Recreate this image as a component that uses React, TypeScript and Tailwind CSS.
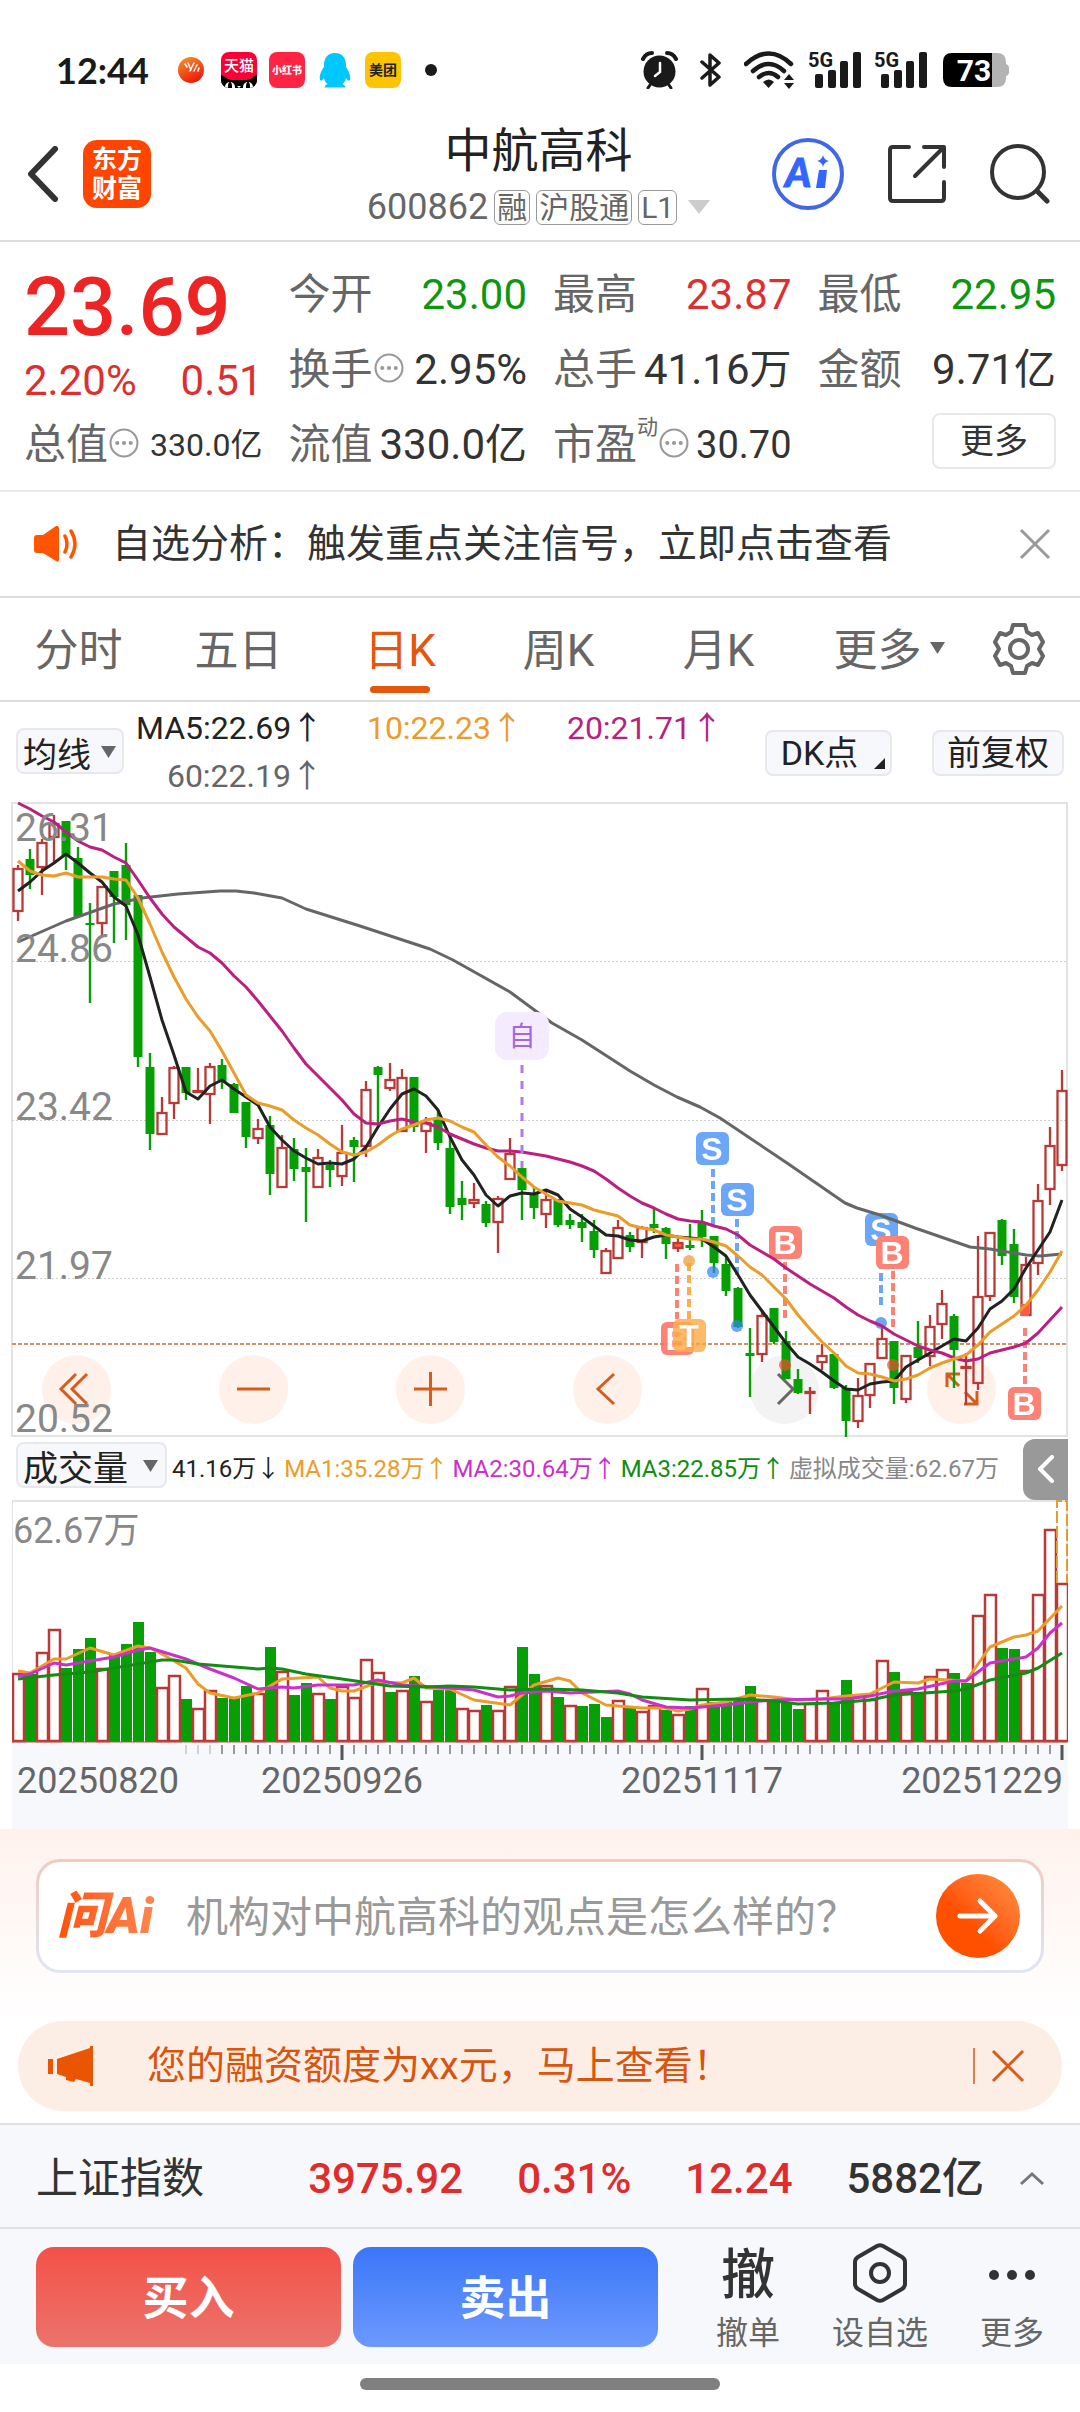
import React from 'react';

type Candle = [string, number, number, number, number];

const STEP = 12;
const RED = '#b83a36';
const GREEN = '#06a006';
const cx = (i: number) => 6 + i * STEP;

/* kind, high, body top, body bottom, low */
const candles: Candle[] = [
  ['r', 65, 68, 112, 121], ['g', 49, 59, 75, 89], ['r', 39, 42, 68, 95], ['r', 15, 23, 38, 62],
  ['g', 21, 21, 56, 70], ['g', 47, 58, 117, 117], ['g', 103, 123, 125, 203], ['r', 86, 86, 124, 136],
  ['g', 71, 71, 97, 143], ['g', 43, 65, 105, 140], ['g', 95, 95, 257, 267], ['g', 253, 267, 334, 350],
  ['r', 297, 312, 335, 335], ['r', 266, 267, 304, 319], ['g', 267, 267, 293, 300], ['r', 268, 290, 292, 293],
  ['r', 263, 266, 295, 324], ['g', 259, 265, 281, 289], ['g', 283, 284, 313, 313], ['g', 302, 302, 337, 348],
  ['r', 319, 328, 339, 344], ['g', 316, 325, 374, 395], ['r', 335, 347, 388, 388], ['g', 338, 349, 369, 381],
  ['g', 348, 367, 372, 422], ['r', 349, 357, 388, 388], ['g', 360, 365, 370, 387], ['r', 325, 352, 377, 386],
  ['g', 337, 340, 347, 382], ['r', 281, 289, 347, 357], ['g', 266, 267, 275, 327], ['r', 263, 279, 289, 291],
  ['r', 269, 277, 332, 332], ['g', 277, 277, 327, 332], ['r', 317, 322, 332, 353], ['g', 310, 319, 343, 350],
  ['g', 333, 348, 407, 414], ['g', 381, 398, 405, 420], ['r', 383, 399, 404, 408], ['g', 401, 404, 423, 427],
  ['r', 396, 398, 423, 453], ['r', 338, 353, 380, 380], ['g', 368, 368, 390, 420], ['g', 387, 393, 408, 419],
  ['r', 390, 399, 415, 428], ['g', 399, 399, 425, 427], ['g', 414, 420, 425, 429], ['g', 414, 422, 428, 442],
  ['g', 420, 431, 450, 458], ['r', 448, 450, 474, 474], ['r', 420, 427, 459, 459], ['g', 432, 435, 447, 452],
  ['r', 426, 427, 443, 458], ['g', 409, 424, 428, 433], ['g', 427, 428, 444, 459], ['r', 439, 442, 449, 452],
  ['g', 424, 445, 448, 450], ['g', 410, 422, 437, 447], ['g', 436, 436, 463, 473], ['g', 457, 464, 491, 496],
  ['g', 487, 488, 527, 528], ['g', 528, 553, 556, 597], ['r', 510, 515, 555, 562], ['g', 508, 508, 542, 544],
  ['g', 531, 541, 579, 579], ['g', 569, 579, 593, 594], ['r', 587, 591, 592, 614], ['r', 544, 555, 563, 570],
  ['g', 554, 554, 588, 589], ['g', 585, 588, 621, 637], ['r', 578, 595, 622, 628], ['r', 563, 563, 596, 608],
  ['r', 527, 538, 559, 559], ['g', 541, 541, 588, 604], ['r', 555, 555, 600, 603], ['g', 521, 547, 558, 563],
  ['r', 515, 526, 557, 566], ['r', 490, 503, 525, 539], ['g', 514, 516, 550, 588], ['r', 553, 566, 568, 605],
  ['r', 436, 496, 584, 590], ['r', 432, 432, 497, 501], ['g', 419, 420, 456, 465], ['g', 429, 444, 497, 503],
  ['r', 457, 464, 516, 516], ['r', 384, 400, 464, 475], ['r', 327, 345, 390, 405], ['r', 270, 290, 366, 371],
];

const ma5 = [
  91, 82, 71, 63, 54, 63, 73, 82, 97, 106, 135, 177, 220, 255, 292, 299, 286, 280, 289, 297, 305, 327, 340, 351, 358, 364,
  363, 364, 359, 347, 327, 309, 294, 289, 296, 310, 337, 360, 375, 395, 406, 396, 393, 394, 390, 395, 409, 417, 426, 435,
  436, 440, 441, 437, 435, 437, 438, 439, 447, 456, 475, 495, 511, 527, 543, 557, 564, 572, 581, 589, 590, 584, 582, 581,
  567, 560, 553, 546, 539, 541, 528, 509, 501, 489, 468, 450, 432, 400,
];
const ma10 = [
  61, 71, 75, 76, 73, 77, 77, 77, 79, 80, 98, 124, 152, 177, 199, 217, 231, 251, 273, 295, 303, 306, 310, 320, 328, 335,
  344, 352, 355, 352, 345, 336, 329, 325, 320, 318, 321, 327, 332, 345, 357, 366, 377, 387, 394, 401, 403, 405, 410, 413,
  416, 425, 428, 430, 435, 437, 439, 439, 442, 446, 456, 467, 475, 487, 499, 515, 529, 542, 553, 566, 573, 574, 577, 581,
  579, 575, 568, 563, 559, 555, 545, 532, 524, 516, 505, 490, 472, 451,
];
const ma20 = [
  3, 9, 16, 22, 32, 41, 47, 50, 57, 63, 80, 98, 114, 127, 137, 147, 153, 163, 176, 187, 201, 216, 231, 248, 264, 276, 288,
  300, 314, 323, 324, 321, 319, 322, 323, 327, 334, 339, 344, 348, 351, 351, 352, 354, 356, 359, 362, 366, 371, 379, 388,
  396, 403, 408, 414, 419, 421, 422, 426, 429, 435, 445, 452, 459, 468, 476, 484, 491, 498, 507, 515, 521, 526, 534, 540,
  546, 550, 553, 558, 561, 559, 553, 550, 547, 543, 533, 520, 507,
];
const ma60 =
  '6,142 54,121 102,104 130,98 166,94 208,91 224,91 242,93 270,98 294,109 348,126 418,149 441,160 498,192 540,223 570,240 618,271 642,285 665,297 688,307 708,318 775,363 833,403 845,408 868,415 903,428 958,447 978,449 1014,455 1028,456 1050,454';

const volumes = [
  69, 68, 90, 113, 74, 93, 104, 74, 87, 98, 120, 90, 55, 67, 43, 34, 52, 44, 44, 56, 49, 95, 71, 47, 59, 49, 43, 56, 45, 83,
  70, 50, 52, 66, 41, 52, 52, 34, 32, 37, 32, 56, 95, 68, 57, 45, 37, 36, 38, 25, 42, 34, 31, 37, 32, 28, 36, 54, 40, 41,
  42, 56, 43, 41, 39, 33, 39, 52, 38, 62, 47, 43, 82, 70, 51, 50, 66, 73, 69, 59, 127, 148, 94, 93, 72, 148, 213, 159,
];
const volumeKinds =
  'rgrrgggrggggrrgrrgggrgrggrgrrrrgrgrggrrgrrggrgrgggrgrrgrgrggggrgggrrggrrrgrgrrggrrggrrrr';

const volMa1 = [
  [0, 71], [1, 69], [3, 83], [4, 83], [6, 94], [8, 87], [10, 96], [11, 94], [12, 88], [14, 74], [15, 58], [16, 49], [18, 44],
  [20, 49], [22, 63], [25, 65], [26, 54], [27, 51], [28, 51], [30, 60], [32, 59], [33, 64], [34, 54], [36, 53], [38, 42],
  [41, 37], [43, 57], [45, 64], [46, 61], [47, 49], [49, 37], [52, 34], [54, 34], [55, 31], [56, 33], [57, 37], [59, 40],
  [61, 47], [63, 45], [65, 42], [67, 43], [69, 46], [71, 48], [73, 60], [75, 59], [76, 63], [79, 61], [81, 95], [83, 105],
  [84, 107], [85, 111], [87, 136],
];
const volMa2 = [
  [0, 66], [1, 68], [3, 79], [4, 77], [8, 85], [10, 92], [11, 94], [14, 83], [15, 78], [16, 73], [18, 64], [20, 53], [22, 55],
  [23, 54], [25, 57], [28, 57], [30, 62], [32, 57], [36, 54], [38, 52], [40, 45], [41, 46], [42, 49], [44, 51], [46, 49],
  [48, 50], [50, 51], [51, 48], [52, 42], [54, 35], [56, 34], [59, 37], [61, 40], [63, 42], [67, 43], [69, 43], [71, 46],
  [73, 51], [75, 53], [78, 61], [79, 61], [81, 79], [84, 85], [85, 94], [86, 109], [87, 119],
];
const volMa3 = [
  [0, 63], [3, 67], [6, 70], [10, 78], [12, 82], [13, 82], [15, 78], [20, 73], [21, 74], [22, 73], [24, 68], [27, 63],
  [31, 56], [34, 55], [36, 56], [38, 55], [41, 52], [44, 53], [47, 52], [50, 49], [52, 45], [56, 42], [60, 43], [63, 41],
  [65, 38], [68, 39], [71, 42], [73, 47], [78, 51], [79, 53], [81, 62], [84, 69], [85, 74], [87, 89],
];

const perBar = (ys: number[]) => ys.map((y, i) => `${cx(i)},${y}`).join(' ');
const fromBase = (pts: number[][]) => pts.map(([i, h]) => `${cx(i)},${242 - h}`).join(' ');

/* letter, left, top, line x, line start, line end, dot y */
const markers: [string, number, number, number, number, number, number][] = [
  ['B', 649, 522, 665, 464, 519, 0],
  ['T', 661, 519, 677, 463, 519, 461],
  ['S', 684, 332, 701, 369, 426, 472],
  ['S', 709, 383, 725, 419, 475, 526],
  ['B', 757, 426, 773, 462, 518, 565],
  ['S', 853, 413, 869, 449, 505, 523],
  ['B', 864, 436, 881, 471, 528, 565],
  ['B', 996, 587, 1013, 528, 584, 0],
];
const markerColor: Record<string, string> = { S: '#5b9df9', B: '#fb7565', T: '#fda43c' };
const dotColor: Record<string, string> = { S: '#2f86ee', B: '#e8502f', T: '#f09a35' };

function Candles() {
  return (
    <g>
      {candles.map(([k, hi, top, bot, lo], i) => {
        const x = cx(i);
        if (k === 'g') {
          return (
            <g key={i} fill={GREEN}>
              <rect x={x - 1.2} y={hi} width="2.4" height={lo - hi} />
              <rect x={x - 4.5} y={top} width="9" height={Math.max(2, bot - top)} />
            </g>
          );
        }
        return (
          <g key={i} stroke={RED} strokeWidth="2.3" fill="none">
            {top > hi && <path d={`M${x} ${hi}V${top}`} />}
            {lo > bot && <path d={`M${x} ${bot}V${lo}`} />}
            <rect x={x - 4.5} y={top + 1} width="9" height={Math.max(1, bot - top - 2)} fill={i === 55 ? '#ff5a46' : 'none'} />
          </g>
        );
      })}
    </g>
  );
}

function PriceChart() {
  return (
    <svg viewBox="0 0 1056 638" className="pointer-events-none relative block h-auto w-full overflow-visible" aria-label="日K线图">
      <path d="M0 3H1055V636H0Z" fill="none" stroke="#e3e3e3" strokeWidth="2" />
      <g stroke="#cfcfcf" strokeDasharray="2 2">
        <path d="M0 161.500H1055M0 320.500H1055M0 478.500H1055" />
      </g>
      <path d="M0 544H1055" stroke="#cf9268" strokeWidth="2" strokeDasharray="4 2" />
      <Candles />
      <rect x="1009" y="504" width="8" height="12" fill="#ff5a46" />
      <g opacity="0.9">
        {markers.map(([c, x, y, lx, y1, y2, dot], i) => (
          <g key={i}>
            <path d={`M${lx} ${y1}V${y2}`} stroke={markerColor[c]} strokeWidth="4" strokeDasharray="8 4" />
            {dot > 0 && <circle cx={lx} cy={dot} r="6" fill={dotColor[c]} fillOpacity="0.8" />}
            <rect x={x} y={y} width="33" height="33" rx="6" fill={markerColor[c]} fillOpacity={c === 'T' ? 0.85 : 1} />
            <text x={x + 16} y={y + 28} textAnchor="middle" fontSize="32" fontWeight="600" fill="#fff" fontFamily="Liberation Sans, sans-serif">
              {c}
            </text>
          </g>
        ))}
      </g>
      <g fill="none" strokeWidth="3" strokeLinejoin="round">
        <polyline points={ma60} stroke="#666" />
        <polyline points={perBar(ma5)} stroke="#222" />
        <polyline points={perBar(ma20)} stroke="#bb1f7f" />
        <polyline points={perBar(ma10)} stroke="#ec9c28" />
      </g>
      <rect x="483" y="212" width="54" height="48" rx="12" fill="#f5ebff" />
      <text x="510" y="246" textAnchor="middle" fontSize="27" fill="#a366e0">自</text>
      <path d="M510 265V368" stroke="#b07ae8" strokeWidth="3" strokeDasharray="8 8" />
      <g fontSize="39" fill="#888">
        <text x="3" y="41">26.31</text>
        <text x="3" y="162">24.86</text>
        <text x="3" y="320">23.42</text>
        <text x="3" y="479">21.97</text>
        <text x="3" y="632">20.52</text>
      </g>
    </svg>
  );
}

function VolumeChart() {
  return (
    <svg viewBox="0 0 1056 329" className="block h-auto w-full" aria-label="成交量图">
      <rect x="0" y="243" width="1056" height="86" fill="#f7f8fb" />
      <path d="M0 243V1H1055V243" fill="none" stroke="#e3e3e3" strokeWidth="2" />
      <text x="1" y="43" fontSize="36" fill="#888">62.67万</text>
      {volumes.map((h, i) =>
        volumeKinds[i] === 'g' ? (
          <rect key={i} x={cx(i) - 5} y={242 - h} width="11" height={h} fill={GREEN} />
        ) : (
          <rect key={i} x={cx(i) - 5} y={243 - h} width="11" height={h - 2} fill="#fff" stroke={RED} strokeWidth="2.5" />
        ),
      )}
      <path d="M1045 83V1H1055V83" fill="none" stroke="#e89a30" strokeWidth="2" strokeDasharray="12 3" />
      <path d="M0 242H1055" stroke="#b85048" strokeWidth="1" />
      <g fill="none" strokeWidth="3" strokeLinejoin="round">
        <polyline points={fromBase(volMa1)} stroke="#ec9c28" />
        <polyline points={fromBase(volMa2)} stroke="#cc30cc" />
        <polyline points={fromBase(volMa3)} stroke="#138c13" />
      </g>
      <g stroke="#999">
        {volumes.map((_, i) =>
          i < 14 ? null : i % 30 === 27 ? (
            <path key={i} d={`M${cx(i)} 245V260`} stroke="#555" strokeWidth="3" />
          ) : (
            <path key={i} d={`M${cx(i)} 245V254`} strokeWidth="2" strokeOpacity={i < 17 ? 0.4 : 1} />
          ),
        )}
      </g>
      <g fontSize="36" fill="#666">
        <text x="5" y="293">20250820</text>
        <text x="330" y="293" textAnchor="middle">20250926</text>
        <text x="690" y="293" textAnchor="middle">20251117</text>
        <text x="1051" y="293" textAnchor="end">20251229</text>
      </g>
    </svg>
  );
}

function Signal() {
  return (
    <svg width="53" height="38" viewBox="0 0 53 38" className="shrink-0 overflow-visible">
      <text x="-1" y="16" fontSize="20" fontWeight="700" fill="#1a1a1a">5G</text>
      <g fill="#1a1a1a">
        <rect x="6" y="23" width="8" height="14" rx="2" />
        <rect x="19" y="19" width="8" height="18" rx="2" />
        <rect x="31" y="10" width="8" height="27" rx="2" />
        <rect x="44" y="1" width="8" height="36" rx="2" />
      </g>
    </svg>
  );
}

function StatusBar() {
  return (
    <div className="flex h-[125px] items-center justify-between pt-[14px] pr-[71px] pl-[56px]">
      <div className="flex items-center">
        <span className="mr-[29px] font-['Lato'] text-[36px] leading-[44px] font-bold text-[#1a1a1a]">12:44</span>
        <svg width="26" height="26" viewBox="0 0 26 26" className="mr-[17px]">
          <defs>
            <linearGradient id="ball" x1="0" y1="0" x2="0.5" y2="1">
              <stop offset="0" stopColor="#f79a2a" />
              <stop offset="1" stopColor="#ee1c0c" />
            </linearGradient>
          </defs>
          <circle cx="13" cy="13" r="13" fill="url(#ball)" />
          <path d="M7 7l2 3M10 6l3 7M16 6l-4 8M19 8l-3 6M21 11l-1 3" stroke="#fff" strokeWidth="1.5" strokeLinecap="round" />
        </svg>
        <svg width="36" height="36" viewBox="0 0 36 36" className="mr-[12px]">
          <defs>
            <clipPath id="tile"><rect width="36" height="36" rx="8" /></clipPath>
          </defs>
          <g clipPath="url(#tile)">
            <rect width="36" height="36" fill="#fa0037" />
            <path d="M0 23l4 2q3 3 6 3h16q3 0 6-3l4-2v13H0z" fill="#000" />
            <ellipse cx="9" cy="35" rx="5" ry="5" fill="#fff" />
            <ellipse cx="27" cy="35" rx="5" ry="5" fill="#fff" />
            <ellipse cx="9" cy="35" rx="2" ry="5" fill="#000" />
            <ellipse cx="27" cy="35" rx="2" ry="5" fill="#000" />
            <path d="M16 34h4l-2 2z" fill="#fff" />
          </g>
          <text x="18" y="19" textAnchor="middle" fontSize="15" fontWeight="500" fill="#fff">天猫</text>
        </svg>
        <svg width="36" height="36" viewBox="0 0 36 36" className="mr-[14px]">
          <rect width="36" height="36" rx="8" fill="#fe2442" />
          <text x="18" y="22" textAnchor="middle" fontSize="10" fontWeight="900" fill="#fff">小红书</text>
        </svg>
        <svg width="32" height="36" viewBox="0 0 32 36" className="mr-[14px]" fill="#00c8fe">
          <path d="M16 1C8 1 4.500 7 5 15C2 19 0 24 1 28C2 29.500 4 28 5 26C5.500 29 7 31 8.500 32C6 33 5 35 6 35.500H26C27 35 26 33 23.500 32C25 31 26.500 29 27 26C28 28 30 29.500 31 28C32 24 30 19 27 15C27.500 7 24 1 16 1Z" />
        </svg>
        <svg width="36" height="36" viewBox="0 0 36 36" className="mr-[24px]">
          <rect width="36" height="36" rx="8" fill="#fec404" />
          <text x="18" y="23" textAnchor="middle" fontSize="14" fontWeight="700" fill="#222">美团</text>
        </svg>
        <span className="size-3 rounded-full bg-[#1a1a1a]" />
      </div>
      <div className="flex items-center">
        <svg width="37" height="38" viewBox="0 0 37 38" className="mr-[22px]">
          <circle cx="18.500" cy="20.500" r="16" fill="#1a1a1a" />
          <path d="M2 8Q5 2 11 2M35 8Q32 2 26 2" stroke="#1a1a1a" strokeWidth="4" strokeLinecap="round" fill="none" />
          <path d="M9 34l-2 3M28 34l2 3" stroke="#1a1a1a" strokeWidth="3" strokeLinecap="round" />
          <path d="M19 12V21L14 25" stroke="#fff" strokeWidth="2.5" fill="none" strokeLinecap="round" />
        </svg>
        <svg width="21" height="36" viewBox="0 0 21 36" className="mr-[23px]">
          <path d="M2 10L19 25L10 33V3L19 11L2 26" fill="none" stroke="#1a1a1a" strokeWidth="3.5" strokeLinejoin="round" strokeLinecap="round" />
        </svg>
        <svg width="52" height="38" viewBox="0 0 52 38" className="mr-[13px]">
          <g fill="none" stroke="#1a1a1a" strokeWidth="4.500" strokeLinecap="round">
            <path d="M2 13Q25 -8 47 13" />
            <path d="M9 20Q25 6 40 20" />
            <path d="M15 26Q25 18 34 26" />
          </g>
          <path d="M19 31Q25 26 30 31L24.500 37Z" fill="#1a1a1a" />
          <path d="M40 29l5-6l5 6zM40 32h10l-5 6z" fill="#1a1a1a" />
        </svg>
        <div className="mr-[13px]"><Signal /></div>
        <div className="mr-[15px]"><Signal /></div>
        <svg width="66" height="34" viewBox="0 0 66 34">
          <path d="M9 0H54Q63 0 63 9V11Q66 12 66 15V19Q66 22 63 23V25Q63 34 54 34H9Z" fill="#b3b3b3" />
          <path d="M9 0H49V34H9Q0 34 0 25V9Q0 0 9 0Z" fill="#000" />
          <text x="31" y="28" textAnchor="middle" fontSize="30" fontWeight="700" fill="#fff">73</text>
        </svg>
      </div>
    </div>
  );
}

function Tag({ children }: { children: React.ReactNode }) {
  return (
    <span className="rounded-[6px] border border-[#999] px-[2px] text-[30px] leading-[33px]">{children}</span>
  );
}

function Header() {
  return (
    <header className="flex h-[117px] items-center border-b-2 border-[#dcdcdc] pr-[30px] pb-[17px] pl-[27px]">
      <div className="flex flex-1 items-center gap-[24px]">
        <button aria-label="返回">
          <svg width="32" height="56" viewBox="0 0 32 56" fill="none" stroke="#333" strokeWidth="6" strokeLinecap="round" strokeLinejoin="round">
            <path d="M28 3L4 28L28 53" />
          </svg>
        </button>
        <button className="flex size-[68px] flex-col items-center justify-center rounded-[14px] bg-[#ff4500] text-[25px] leading-[29px] font-bold text-white">
          <span>东方</span>
          <span>财富</span>
        </button>
      </div>
      <div className="flex flex-col items-center text-[#666]">
        <h1 className="text-[47px] leading-[66px] text-[#222]">中航高科</h1>
        <button className="flex items-center gap-[6px]">
          <span className="text-[36px] leading-[46px]">600862</span>
          <Tag>融</Tag>
          <Tag>沪股通</Tag>
          <Tag>L1</Tag>
          <svg width="22" height="14" viewBox="0 0 22 14" className="ml-[5px]">
            <path d="M0 0H22L11 14Z" fill="#ccc" />
          </svg>
        </button>
      </div>
      <div className="flex flex-1 items-center justify-end gap-[43px]">
        <button aria-label="AI">
          <svg width="72" height="72" viewBox="0 0 72 72">
            <circle cx="36" cy="36" r="34" fill="none" stroke="#4067e4" strokeWidth="4" />
            <text x="13" y="49" fontSize="40" fontWeight="900" fontStyle="italic" fill="#3366ff" stroke="#3366ff" strokeWidth="1" fontFamily="Lato, sans-serif">A</text>
            <path d="M47 32H55L53 50H44Z" fill="#3366ff" />
            <path d="M51 17Q52 22 57 23Q52 24 51 29Q50 24 45 23Q50 22 51 17Z" fill="#3366ff" />
          </svg>
        </button>
        <button aria-label="分享">
          <svg width="60" height="60" viewBox="0 0 60 60" fill="none" stroke="#333" strokeWidth="4" strokeLinecap="round" strokeLinejoin="round">
            <path d="M22 3H6Q3 3 3 6V54Q3 57 6 57H54Q57 57 57 54V38M37 3H57V23M57 3L28 32" />
          </svg>
        </button>
        <button aria-label="搜索">
          <svg width="60" height="60" viewBox="0 0 60 60" fill="none" stroke="#333" strokeWidth="4" strokeLinecap="round">
            <circle cx="28" cy="28" r="26" />
            <path d="M47 47L57 57" strokeWidth="5" />
          </svg>
        </button>
      </div>
    </header>
  );
}

function Info() {
  return (
    <svg width="30" height="30" viewBox="0 0 29 29" className="mb-[4px] ml-px shrink-0">
      <circle cx="14.500" cy="14.500" r="13" fill="none" stroke="#999" strokeWidth="2" />
      <g fill="#999">
        <circle cx="8" cy="14.500" r="2" />
        <circle cx="14.500" cy="14.500" r="2" />
        <circle cx="21" cy="14.500" r="2" />
      </g>
    </svg>
  );
}

function Stat({ label, value, tone = 'text-[#333]', info }: { label: string; value: string; tone?: string; info?: boolean }) {
  return (
    <div className="flex h-[75px] items-center justify-between whitespace-nowrap">
      <span className="flex items-center text-[#666]">
        {label}
        {info && <Info />}
      </span>
      <span className={tone}>{value}</span>
    </div>
  );
}

function Quote() {
  return (
    <section className="grid grid-cols-4 gap-x-[26px] border-b-2 border-[#ececec] px-[24px] pt-[15px] pb-[8px] text-[42px] leading-[50px]">
      <div className="text-[#dc3030]">
        <div className="h-[98px] pt-[2px] text-[81px] leading-[98px] font-medium text-[#ed2424]">23.69</div>
        <div className="flex h-[52px] items-center justify-between">
          <span>2.20%</span>
          <span>0.51</span>
        </div>
        <div className="flex h-[75px] items-center justify-between whitespace-nowrap">
          <span className="flex items-center text-[#666]">总值<Info /></span>
          <span className="text-[32px] text-[#333]">330.0亿</span>
        </div>
      </div>
      <div>
        <Stat label="今开" value="23.00" tone="text-[#0f960f]" />
        <Stat label="换手" value="2.95%" info />
        <Stat label="流值" value="330.0亿" />
      </div>
      <div>
        <Stat label="最高" value="23.87" tone="text-[#dc3030]" />
        <Stat label="总手" value="41.16万" />
        <div className="flex h-[75px] items-center justify-between whitespace-nowrap">
          <span className="flex items-center text-[#666]">
            市盈
            <sup className="top-0 mb-[36px] text-[21px] leading-[24px]">动</sup>
            <Info />
          </span>
          <span className="text-[38px] text-[#333]">30.70</span>
        </div>
      </div>
      <div>
        <Stat label="最低" value="22.95" tone="text-[#0f960f]" />
        <Stat label="金额" value="9.71亿" />
        <div className="flex h-[75px] items-start justify-end pt-[6px]">
          <button className="h-[56px] w-[124px] rounded-[8px] border-2 border-[#e8e8e8] text-[34px] leading-[48px] text-[#333]">更多</button>
        </div>
      </div>
    </section>
  );
}

function Notice() {
  return (
    <section className="flex h-[106px] items-center border-b-2 border-[#dcdcdc] pr-[29px] pl-[34px]">
      <svg width="44" height="36" viewBox="0 0 44 36">
        <path d="M3 9H9L22 0Q25 -1 25 3V33Q25 37 22 35L9 27H3Q0 27 0 24V12Q0 9 3 9Z" fill="#ff5500" />
        <path d="M31 10Q35 18 31 26M37 5Q45 18 37 31" fill="none" stroke="#ff5500" strokeWidth="3.5" strokeLinecap="round" />
      </svg>
      <a href="#analysis" className="ml-[34px] flex-1 text-[39px] leading-[50px] whitespace-nowrap text-[#333]">
        自选分析：触发重点关注信号，立即点击查看
      </a>
      <button aria-label="关闭提示">
        <svg width="32" height="32" viewBox="0 0 32 32" stroke="#999" strokeWidth="3">
          <path d="M2 2L30 30M30 2L2 30" />
        </svg>
      </button>
    </section>
  );
}

function Tabs() {
  const tabs = ['分时', '五日', '日K', '周K', '月K', '更多'];
  return (
    <nav className="flex h-[104px] items-stretch border-b-2 border-[#dcdcdc] text-[44px] text-[#666]">
      <div className="grid flex-1 grid-cols-6">
        {tabs.map((t) => (
          <button
            key={t}
            className={
              t === '日K'
                ? 'relative pt-[4px] text-[#e2570d]'
                : t === '更多'
                  ? 'flex items-center justify-center pt-[4px] pl-[18px] whitespace-nowrap'
                  : 'pt-[4px] pr-[3px]'
            }
          >
            {t}
            {t === '日K' && <span className="absolute bottom-[7px] left-1/2 h-[7px] w-[60px] -translate-x-1/2 rounded-full bg-[#e2570d]" />}
            {t === '更多' && (
              <svg width="15" height="12" viewBox="0 0 15 12" className="mb-[6px] ml-[8px] shrink-0">
                <path d="M0 0H15L7.500 12Z" fill="#666" />
              </svg>
            )}
          </button>
        ))}
      </div>
      <button aria-label="设置" className="flex w-[120px] items-center justify-center pr-[3px]">
        <svg width="54" height="54" viewBox="0 0 54 54" fill="none" stroke="#666" strokeWidth="4" strokeLinejoin="round">
          <path d="M21 3H33L35 10L40 13L46 11L51 20L47 27L51 34L46 43L40 41L35 44L33 51H21L19 44L14 41L8 43L3 34L7 27L3 20L8 11L14 13L19 10Z" />
          <circle cx="27" cy="27" r="9" />
        </svg>
      </button>
    </nav>
  );
}

function Dropdown({ label, options, box, tri }: { label: string; options: string[]; box: string; tri: string }) {
  return (
    <label className={box}>
      <select aria-label={label} className="h-[46px] w-full appearance-none rounded-[8px] border-2 border-[#e6e8ee] bg-[#f7f8fb] pl-[5px] text-[#222]">
        {options.map((o) => (
          <option key={o}>{o}</option>
        ))}
      </select>
      <svg width="15" height="12" viewBox="0 0 15 12" className={tri}>
        <path d="M0 0H15L7.500 12Z" fill="#666" />
      </svg>
    </label>
  );
}

function Averages() {
  return (
    <section className="flex h-[98px] items-center justify-between px-[16px] pt-px text-[34px]">
      <div className="flex items-center">
        <Dropdown label="均线" options={['均线', 'BOLL']} box="relative block w-[108px] pt-[6px]" tri="absolute top-[24px] right-[8px]" />
        <div className="ml-[12px] grid grid-cols-[187px_200px_200px] text-right text-[32px] leading-[48px] whitespace-nowrap">
          <span className="text-[#222]">MA5:22.69↑</span>
          <span className="text-[#ec9c28]">10:22.23↑</span>
          <span className="text-[#bb1f7f]">20:21.71↑</span>
          <span className="text-[#666]">60:22.19↑</span>
        </div>
      </div>
      <div className="flex gap-[40px] pt-[2px] text-[#222]">
        <button className="relative h-[46px] w-[127px] rounded-[8px] border-2 border-[#e6e8ee] bg-[#f7f8fb] pr-[18px] leading-[40px]">
          DK点
          <svg width="11" height="11" viewBox="0 0 11 11" className="absolute right-[5px] bottom-[5px]">
            <path d="M11 0V11H0Z" fill="#222" />
          </svg>
        </button>
        <button className="h-[46px] w-[132px] rounded-[8px] border-2 border-[#e6e8ee] bg-[#f7f8fb] leading-[40px]">前复权</button>
      </div>
    </section>
  );
}

const controls = [
  { name: '最早', d: 'M34 19L19 34L34 49M45 19L30 34L45 49', dim: false },
  { name: '缩小', d: 'M18 34H51', dim: false },
  { name: '放大', d: 'M18 34H51M34.500 17V51', dim: false },
  { name: '向左', d: 'M41 19L25 34L41 49', dim: false },
  { name: '向右', d: 'M28 19L43 34L28 49', dim: true },
  { name: '全屏', d: 'M20 32V19H33M20 19L32 31M50 36V49H37M50 49L38 37', dim: false },
];

function Charts() {
  return (
    <section className="px-[12px]">
      <div className="relative">
        <div className="absolute inset-x-[30px] bottom-[14px] flex justify-between pr-[42px]">
          {controls.map((c) => (
            <button key={c.name} aria-label={c.name} className={c.dim ? 'size-[69px] rounded-full bg-[#f3f3f3]' : 'size-[69px] rounded-full bg-[#fff1ea]'}>
              <svg viewBox="0 0 69 69" fill="none" stroke={c.dim ? '#666' : '#d65c1c'} strokeWidth="3">
                <path d={c.d} />
              </svg>
            </button>
          ))}
        </div>
        <PriceChart />
      </div>
      <div className="flex h-[62px] items-center">
        <Dropdown label="副图指标" options={['成交量', 'MACD']} box="relative ml-[4px] block w-[151px] shrink-0 text-[35px]" tri="absolute top-[18px] right-[9px]" />
        <div className="flex flex-1 justify-between pr-[24px] pl-[5px] text-[24px] leading-[40px] whitespace-nowrap">
          <span className="text-[#222]">41.16万↓</span>
          <span className="text-[#ec9c28]">MA1:35.28万↑</span>
          <span className="text-[#cc30cc]">MA2:30.64万↑</span>
          <span className="text-[#138c13]">MA3:22.85万↑</span>
          <span className="text-[#888]">虚拟成交量:62.67万</span>
        </div>
        <button aria-label="展开指标" className="flex h-[61px] w-[45px] shrink-0 items-center justify-center rounded-l-[12px] bg-[#999]">
          <svg width="18" height="28" viewBox="0 0 18 28" fill="none" stroke="#fff" strokeWidth="4" strokeLinecap="round" strokeLinejoin="round">
            <path d="M15 2L3 14L15 26" />
          </svg>
        </button>
      </div>
      <VolumeChart />
    </section>
  );
}

function AskAi() {
  return (
    <section className="bg-gradient-to-b from-[#fff2ed] to-white px-[36px] pt-[30px] pb-[48px]">
      <div className="rounded-[24px] bg-gradient-to-b from-[#f3c9c0] to-[#dde7f3] p-[3px]">
        <form className="flex h-[108px] items-center rounded-[21px] bg-white pr-[21px] pl-[18px]" onSubmit={(e) => e.preventDefault()}>
          <span className="w-[106px] bg-gradient-to-r from-[#ff5000] to-[#ff8a50] bg-clip-text text-[50px] leading-[56px] font-black whitespace-nowrap text-transparent italic">
            问Ai
          </span>
          <input
            aria-label="提问"
            placeholder="机构对中航高科的观点是怎么样的？"
            className="ml-[23px] min-w-0 flex-1 pt-[3px] text-[42px] leading-[56px] outline-none placeholder:text-[#999]"
          />
          <button aria-label="发送" className="flex size-[84px] items-center justify-center rounded-full bg-gradient-to-tr from-[#ff5000] from-40% to-[#ff9040]">
            <svg width="42" height="38" viewBox="0 0 42 38" fill="none" stroke="#fff" strokeWidth="5" strokeLinecap="round" strokeLinejoin="round">
              <path d="M3 19H38M23 4L38 19L23 34" />
            </svg>
          </button>
        </form>
      </div>
    </section>
  );
}

function Banner() {
  return (
    <section className="px-[18px] pb-[12px]">
      <div className="flex h-[90px] items-center rounded-full bg-[#fceee5] pr-[37px] pl-[30px]">
        <svg width="46" height="40" viewBox="0 0 46 40" fill="#ea5504">
          <path d="M0 13H5V28H0zM9 13L42 2V0H45V40H42V37L28 33L26 36L18 34V31L9 28Z" />
        </svg>
        <a href="#credit" className="ml-[53px] flex-1 text-[39px] leading-[50px] whitespace-nowrap text-[#d85510]">
          您的融资额度为xx元，马上查看！
        </a>
        <span className="mr-[16px] h-[36px] w-[2px] bg-[#dd8050]" />
        <button aria-label="关闭横幅">
          <svg width="34" height="34" viewBox="0 0 34 34" stroke="#dc5a18" strokeWidth="3">
            <path d="M2 2L32 32M32 2L2 32" />
          </svg>
        </button>
      </div>
    </section>
  );
}

function IndexBar() {
  return (
    <section className="flex h-[106px] items-center justify-between border-y-2 border-[#dfe0e2] px-[36px] pt-[5px] text-[42px] leading-[50px] font-medium whitespace-nowrap text-[#e02c2c]">
      <span className="font-normal text-[#333]">上证指数</span>
      <div className="flex items-center gap-[54px]">
        <span>3975.92</span>
        <span>0.31%</span>
        <span>12.24</span>
        <button className="flex items-center gap-[36px] text-[#333]">
          5882亿
          <svg width="24" height="14" viewBox="0 0 24 14" fill="none" stroke="#777" strokeWidth="3">
            <path d="M1 12L12 2L23 12" />
          </svg>
        </button>
      </div>
    </section>
  );
}

function ActionBar() {
  return (
    <footer className="flex h-[135px] items-start gap-3 px-9 pt-[18px]">
      <button className="h-[100px] flex-1 rounded-[18px] bg-gradient-to-b from-[#f35047] to-[#eb736c] pt-[3px] text-[46px] font-bold text-white">买入</button>
      <button className="h-[100px] flex-1 rounded-[18px] bg-gradient-to-b from-[#3a76f8] to-[#6c99fe] pt-[3px] text-[46px] font-bold text-white">卖出</button>
      <div className="ml-[46px] flex w-[328px] justify-between text-[32px] leading-[40px] text-[#666]">
        <button className="flex flex-col items-center">
          <span className="mb-[8px] h-[58px] text-[54px] leading-[58px] font-medium text-[#333]">撤</span>
          撤单
        </button>
        <button className="flex flex-col items-center">
          <svg width="54" height="60" viewBox="0 0 54 60" fill="none" stroke="#333" strokeWidth="4" strokeLinejoin="round" className="-mt-1 mb-[10px]">
            <path d="M24 3Q27 1.500 30 3L49 14Q52 16 52 19V41Q52 44 49 46L30 57Q27 58.500 24 57L5 46Q2 44 2 41V19Q2 16 5 14Z" />
            <circle cx="27" cy="30" r="9" />
          </svg>
          设自选
        </button>
        <button className="flex flex-col items-center">
          <svg width="48" height="58" viewBox="0 0 48 58" fill="#333" className="mb-[8px]">
            <circle cx="6" cy="28" r="5" />
            <circle cx="24" cy="28" r="5" />
            <circle cx="42" cy="28" r="5" />
          </svg>
          更多
        </button>
      </div>
    </footer>
  );
}

export default function App() {
  return (
    <div className="min-h-screen bg-white font-['Roboto','Noto_Sans_CJK_SC',sans-serif]">
      <StatusBar />
      <Header />
      <Quote />
      <Notice />
      <Tabs />
      <Averages />
      <Charts />
      <AskAi />
      <Banner />
      <div className="bg-[#f7f8fb]">
        <IndexBar />
        <ActionBar />
      </div>
      <div className="flex h-[47px] justify-center pt-[14px]">
        <span className="h-[12px] w-1/3 rounded-full bg-[#808080]" />
      </div>
    </div>
  );
}
